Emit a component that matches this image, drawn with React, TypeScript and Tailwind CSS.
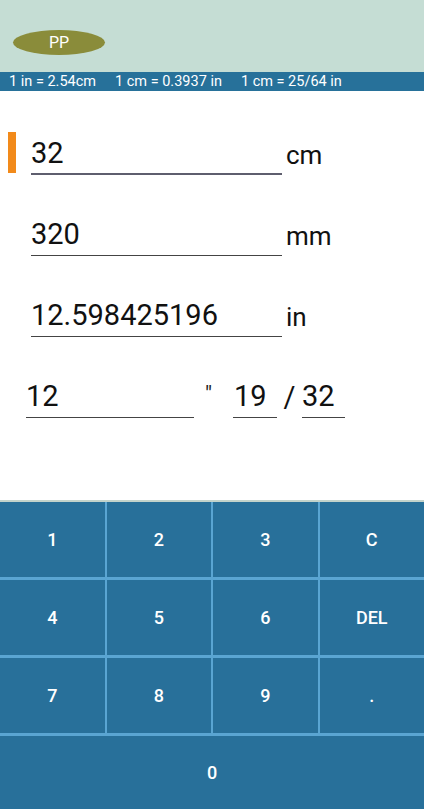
const keys = [
  ["1", "2", "3", "C"],
  ["4", "5", "6", "DEL"],
  ["7", "8", "9", "."],
];

const Field = ({
  value,
  unit,
  focused,
}: {
  value: string;
  unit: string;
  focused?: boolean;
}) => (
  <div className="flex h-[44px] items-stretch">
    <div className="w-[31px] shrink-0 pl-[8px] pt-[1px]">
      {focused && <div className="h-[41px] w-[8px] bg-[#f28a1a]" />}
    </div>
    <div
      className={
        focused
          ? "flex w-[251px] items-end border-b-2 border-[#5e5e6e] pb-[5px]"
          : "flex w-[251px] items-end border-b border-[#444] pb-[6px]"
      }
    >
      <span className="text-[29px] leading-none text-[#111]">{value}</span>
    </div>
    <div className="flex items-end pb-[7px] pl-[4px]">
      <span className="text-[26px] leading-none text-[#111]">{unit}</span>
    </div>
  </div>
);

export default function App() {
  return (
    <div className="flex h-[809px] w-[424px] flex-col bg-white font-['Roboto',sans-serif]">
      <div className="h-[72px] shrink-0 bg-[#c5ddd4] pl-[13px] pt-[30px]">
        <div className="flex h-[25px] w-[92px] items-center justify-center rounded-[50%] bg-[#8a8c3a] text-[16px] text-white">
          PP
        </div>
      </div>

      <div className="flex h-[19px] shrink-0 items-center gap-[19px] bg-[#27719a] pl-[9px] text-[14.5px] text-white">
        <span>1 in = 2.54cm</span>
        <span>1 cm = 0.3937 in</span>
        <span>1 cm = 25/64 in</span>
      </div>

      <div className="flex flex-1 flex-col gap-[37px] pt-[40px]">
        <Field value="32" unit="cm" focused />
        <Field value="320" unit="mm" />
        <Field value="12.598425196" unit="in" />
        <div className="flex h-[44px] items-stretch pl-[26px]">
          <div className="flex w-[168px] items-end border-b border-[#444] pb-[6px]">
            <span className="text-[29px] leading-none text-[#111]">12</span>
          </div>
          <div className="w-[39px] pl-[11px] pt-[9px] text-[22px] leading-none text-[#222]">
            "
          </div>
          <div className="flex w-[44px] items-end border-b border-[#444] pb-[6px] pl-[1px]">
            <span className="text-[29px] leading-none text-[#111]">19</span>
          </div>
          <div className="flex w-[25px] items-end justify-center pb-[6px]">
            <span className="text-[29px] leading-none text-[#111]">/</span>
          </div>
          <div className="flex w-[43px] items-end border-b border-[#444] pb-[6px]">
            <span className="text-[29px] leading-none text-[#111]">32</span>
          </div>
        </div>
      </div>

      <div className="flex h-[309px] shrink-0 flex-col gap-[3px] border-t-2 border-[#c3d3cb] bg-[#5aa5d2]">
        {keys.map((row) => (
          <div key={row[0]} className="grid h-[75px] grid-cols-4 gap-[2px]">
            {row.map((k) => (
              <button
                key={k}
                className="flex items-center justify-center bg-[#28709a] text-[18px] font-medium text-white"
              >
                {k}
              </button>
            ))}
          </div>
        ))}
        <button className="flex flex-1 items-center justify-center bg-[#28709a] text-[18px] font-medium text-white">
          0
        </button>
      </div>
    </div>
  );
}
